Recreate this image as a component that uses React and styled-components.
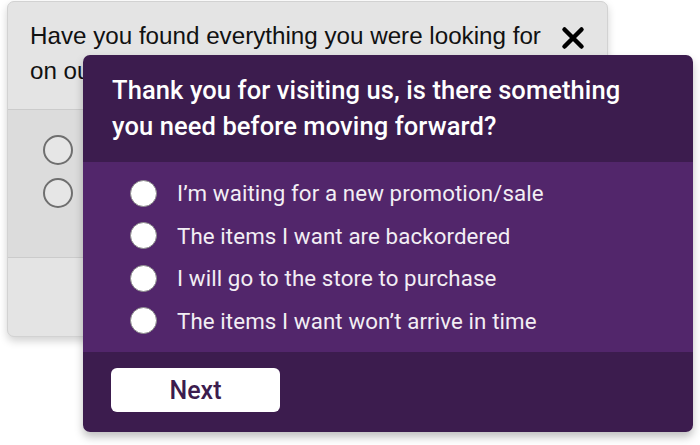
import React from "react";
import styled, { createGlobalStyle } from "styled-components";

const Global = createGlobalStyle`
  html, body { margin: 0; padding: 0; background: #ffffff; }
  body { width: 700px; height: 445px; overflow: hidden; }
`;

const Stage = styled.div`
  position: relative;
  width: 700px;
  height: 445px;
  padding: 1px 0 0 7px;
  box-sizing: border-box;
`;

const BackCard = styled.div`
  width: 601px;
  height: 336px;
  box-sizing: border-box;
  border: 1px solid #d2d2d2;
  border-radius: 7px;
  background: #e4e4e4;
  box-shadow: 0 4px 8px rgba(0, 0, 0, 0.18);
  display: flex;
  flex-direction: column;
  overflow: hidden;
  font-family: "Liberation Sans", Arial, sans-serif;
`;

const BackHeader = styled.div`
  height: 108px;
  box-sizing: border-box;
  padding: 16px 22px 0 22px;
  display: flex;
  align-items: flex-start;
  justify-content: space-between;
  border-bottom: 1px solid #cbcbcb;
`;

const BackTitle = styled.div`
  font-size: 24.2px;
  line-height: 35px;
  color: #111;
  width: 530px;
`;

const CloseBtn = styled.div`
  margin-top: 8px;
  width: 24px;
  height: 24px;
  display: flex;
`;

const BackBody = styled.div`
  height: 148px;
  box-sizing: border-box;
  background: #dcdcdc;
  border-bottom: 1px solid #cbcbcb;
  padding: 25px 0 0 35px;
  display: flex;
  flex-direction: column;
  gap: 13px;
`;

const BackRadio = styled.div`
  width: 30px;
  height: 30px;
  box-sizing: border-box;
  border-radius: 50%;
  border: 2px solid #6f6f6f;
  background: #e6e6e6;
`;

const BackFooter = styled.div`
  flex: 1;
`;

const FrontCard = styled.div`
  position: absolute;
  left: 83px;
  top: 55px;
  width: 610px;
  height: 377px;
  border-radius: 7px;
  overflow: hidden;
  box-shadow: 0 5px 9px rgba(0, 0, 0, 0.25);
  display: flex;
  flex-direction: column;
  font-family: Roboto, "Noto Sans", sans-serif;
  color: #fff;
`;

const FrontHeader = styled.div`
  height: 107px;
  box-sizing: border-box;
  background: #3c1c4e;
  padding: 17px 20px 0 29px;
`;

const FrontTitle = styled.div`
  font-size: 25.5px;
  font-weight: 500;
  line-height: 36px;
  letter-spacing: 0.1px;
`;

const Options = styled.div`
  height: 190px;
  box-sizing: border-box;
  background: #52266b;
  padding: 18px 0 0 47px;
  display: flex;
  flex-direction: column;
  gap: 16.5px;
`;

const Option = styled.label`
  display: flex;
  align-items: center;
  gap: 20px;
  height: 26px;
  font-size: 22.3px;
  letter-spacing: 0.1px;
  color: #f2eef4;
`;

const Radio = styled.span`
  width: 27px;
  height: 27px;
  box-sizing: border-box;
  border-radius: 50%;
  background: #ffffff;
  border: 1.5px solid #8a8a8a;
  flex: none;
`;

const FrontFooter = styled.div`
  flex: 1;
  background: #3c1c4e;
  padding: 16px 0 0 28px;
`;

const NextButton = styled.button`
  width: 169px;
  height: 44px;
  border: none;
  border-radius: 6px;
  background: #ffffff;
  color: #3c1c4e;
  font-family: Roboto, "Noto Sans", sans-serif;
  font-size: 25px;
  font-weight: 500;
  padding: 0;
`;

const options = [
  "I’m waiting for a new promotion/sale",
  "The items I want are backordered",
  "I will go to the store to purchase",
  "The items I want won’t arrive in time",
];

export default function App() {
  return (
    <>
      <Global />
      <Stage>
        <BackCard>
          <BackHeader>
            <BackTitle>
              Have you found everything you were looking for on our site?
            </BackTitle>
            <CloseBtn>
              <svg width="24" height="24" viewBox="0 0 24 24">
                <path
                  d="M3.5 3.5 L20.5 20.5 M20.5 3.5 L3.5 20.5"
                  stroke="#000"
                  strokeWidth="4.5"
                  strokeLinecap="round"
                />
              </svg>
            </CloseBtn>
          </BackHeader>
          <BackBody>
            <BackRadio />
            <BackRadio />
          </BackBody>
          <BackFooter />
        </BackCard>
        <FrontCard>
          <FrontHeader>
            <FrontTitle>
              Thank you for visiting us, is there something
              <br />
              you need before moving forward?
            </FrontTitle>
          </FrontHeader>
          <Options>
            {options.map((o) => (
              <Option key={o}>
                <Radio />
                {o}
              </Option>
            ))}
          </Options>
          <FrontFooter>
            <NextButton>Next</NextButton>
          </FrontFooter>
        </FrontCard>
      </Stage>
    </>
  );
}
